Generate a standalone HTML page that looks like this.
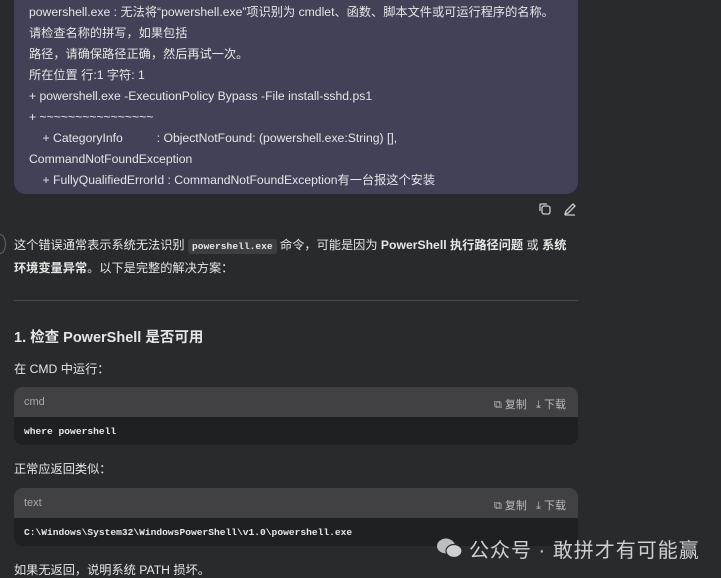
<!DOCTYPE html>
<html><head><meta charset="utf-8"><style>
body{margin:0;width:721px;height:577px;overflow:hidden;background:#292a2d;color:#e6e6e6;font-family:"Liberation Sans","Noto Sans CJK SC",sans-serif;font-size:12.2px;position:relative}
.a{position:absolute;white-space:nowrap}
.bub{position:absolute;left:14px;top:-12px;width:564px;height:206px;background:#414158;border-radius:12px}
.bub div{position:absolute;left:15px;white-space:nowrap;line-height:16px}
.mono{font-family:"Liberation Mono",monospace;font-size:9.6px;font-weight:bold}
.cb{position:absolute;left:14px;width:564px;border-radius:9px;overflow:hidden}
.hd{height:30px;background:#404045;position:relative;color:#a8a8ad;font-size:11px}
.bd{height:28px;background:#1f2023;position:relative}
.bd span{position:absolute;left:10px;top:9px;color:#e8e8e8}
.tools{position:absolute;right:12px;top:9px;font-size:11px;color:#bbb}
</style></head><body>
<div class="bub">
<div style="top:16px">powershell.exe : 无法将“powershell.exe”项识别为 cmdlet、函数、脚本文件或可运行程序的名称。</div>
<div style="top:37px">请检查名称的拼写，如果包括</div>
<div style="top:58px">路径，请确保路径正确，然后再试一次。</div>
<div style="top:79px">所在位置 行:1 字符: 1</div>
<div style="top:100px">+ powershell.exe -ExecutionPolicy Bypass -File install-sshd.ps1</div>
<div style="top:121px">+ ~~~~~~~~~~~~~~~~</div>
<div style="top:142px">&nbsp;&nbsp;&nbsp;&nbsp;+ CategoryInfo&nbsp;&nbsp;&nbsp;&nbsp;&nbsp;&nbsp;&nbsp;&nbsp;&nbsp;&nbsp;: ObjectNotFound: (powershell.exe:String) [],</div>
<div style="top:163px">CommandNotFoundException</div>
<div style="top:184px">&nbsp;&nbsp;&nbsp;&nbsp;+ FullyQualifiedErrorId : CommandNotFoundException有一台报这个安装</div>
</div>
<svg class="a" style="left:538px;top:202px" width="14" height="14" viewBox="0 0 14 14" fill="none" stroke="#ccc" stroke-width="1.3"><rect x="4" y="4" width="8" height="8" rx="2"/><path d="M2 9V3a1 1 0 0 1 1-1h6"/></svg>
<svg class="a" style="left:563px;top:202px" width="14" height="14" viewBox="0 0 14 14" fill="none" stroke="#ccc" stroke-width="1.3"><path d="M2 12l1-3 7-7 2 2-7 7z M2 13h10"/></svg>
<div class="a" style="left:-6px;top:234px;width:10px;height:18px;border:1px solid #666;border-radius:50%"></div>
<div class="a" style="left:14px;top:235px">这个错误通常表示系统无法识别 <span class="mono" style="background:#3d3e42;padding:2px 4px;border-radius:3px">powershell.exe</span> 命令，可能是因为 <b>PowerShell 执行路径问题</b> 或 <b>系统</b></div>
<div class="a" style="left:14px;top:258px"><b>环境变量异常</b>。以下是完整的解决方案：</div>
<div class="a" style="left:14px;top:300px;width:564px;height:1px;background:#4a4b50"></div>
<div class="a" style="left:14px;top:326px;font-size:14.5px;font-weight:bold">1. 检查 PowerShell 是否可用</div>
<div class="a" style="left:14px;top:359px">在 CMD 中运行：</div>
<div class="cb" style="top:387px"><div class="hd"><span class="a" style="left:10px;top:9px">cmd</span><span class="tools">⧉ 复制 &nbsp;&nbsp;⤓ 下载</span></div><div class="bd"><span class="mono">where powershell</span></div></div>
<div class="a" style="left:14px;top:459px">正常应返回类似：</div>
<div class="cb" style="top:488px"><div class="hd"><span class="a" style="left:10px;top:9px">text</span><span class="tools">⧉ 复制 &nbsp;&nbsp;⤓ 下载</span></div><div class="bd"><span class="mono">C:\Windows\System32\WindowsPowerShell\v1.0\powershell.exe</span></div></div>
<div class="a" style="left:14px;top:560px">如果无返回，说明系统 PATH 损坏。</div>
<svg class="a" style="left:437px;top:537px" width="26" height="22" viewBox="0 0 26 22" fill="#bdbdbd"><ellipse cx="9" cy="9" rx="9" ry="7.5"/><ellipse cx="17" cy="14" rx="8" ry="6.5" fill="#d0d0d0" stroke="#292a2d" stroke-width="1.2"/></svg>
<div class="a" style="left:469px;top:534px;font-size:20px;color:#cfcfcf;letter-spacing:1px">公众号 · 敢拼才有可能赢</div>
</body></html>
